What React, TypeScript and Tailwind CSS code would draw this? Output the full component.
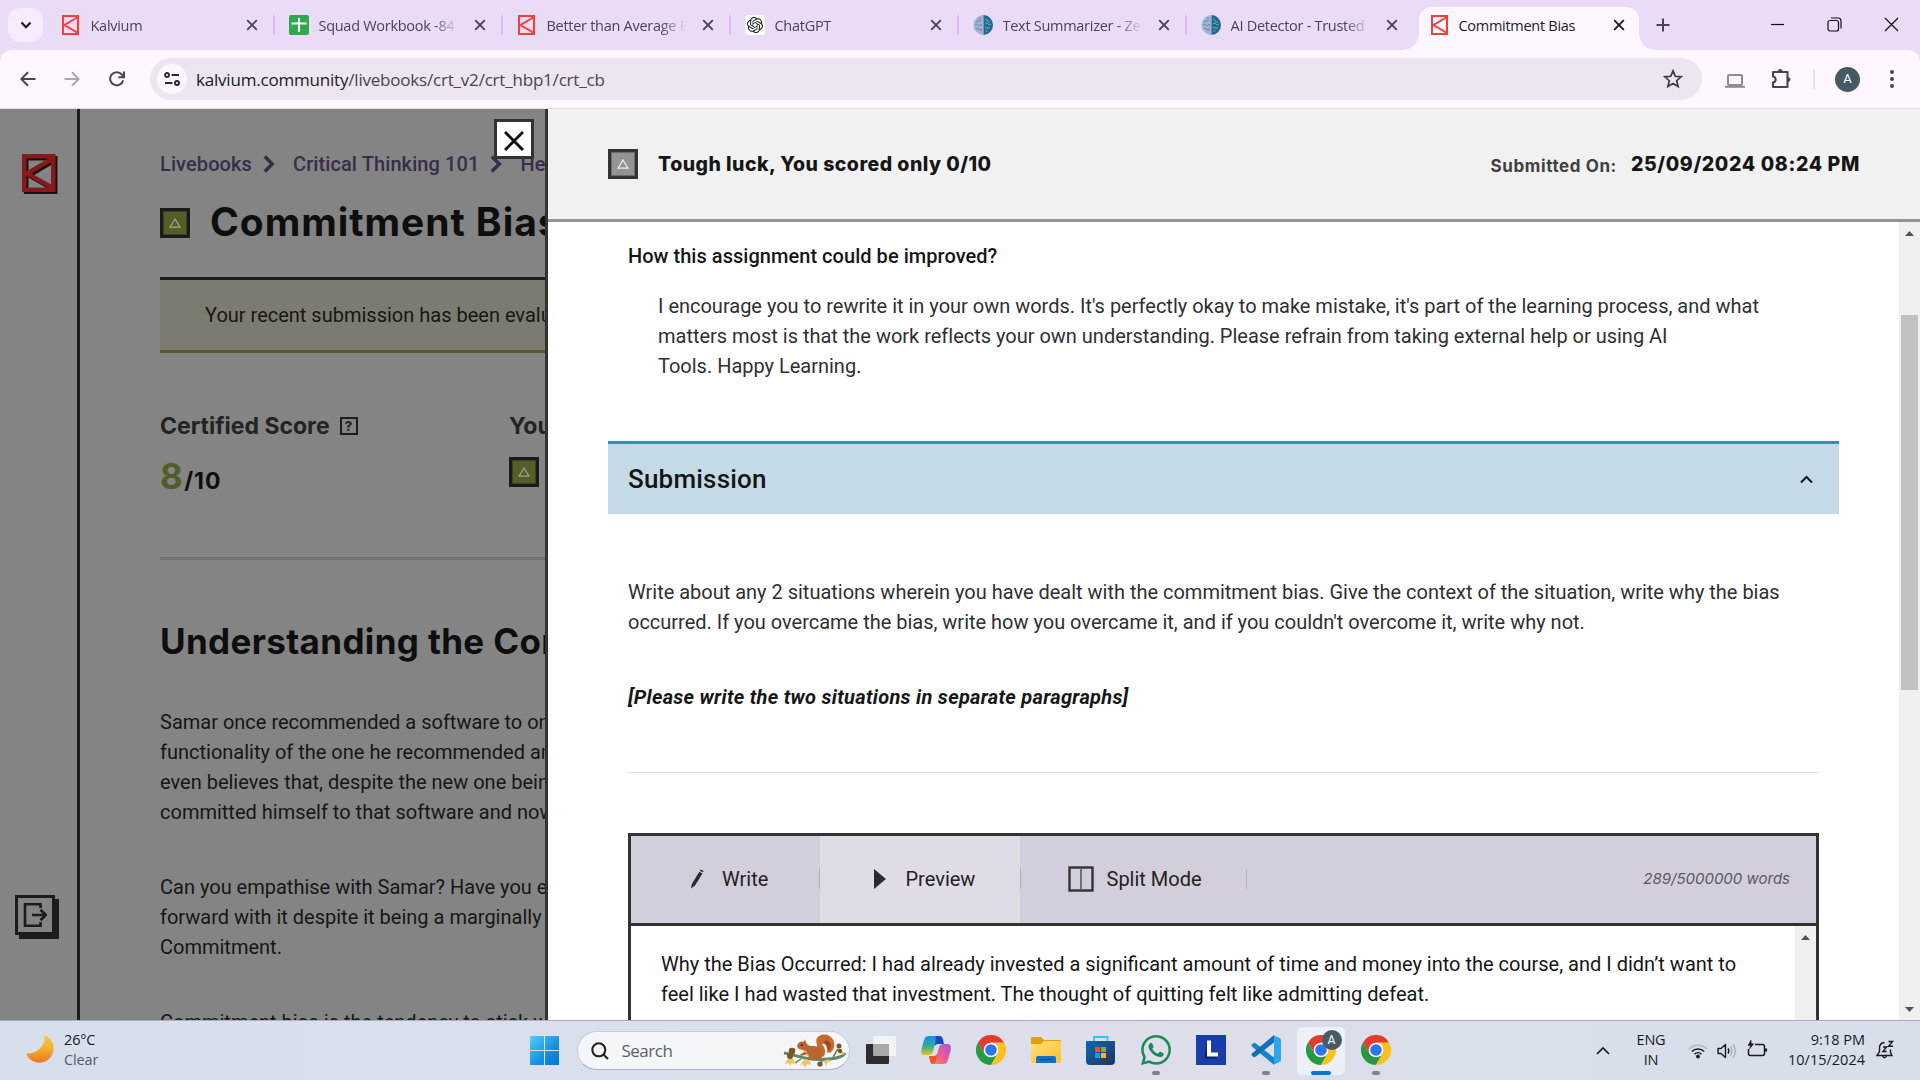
import React from "react";

type Kids = { children?: React.ReactNode };

function KalviumMark({ className, color = "#fb3b36" }: { className: string; color?: string }) {
  return (
    <svg viewBox="0 0 34 40" preserveAspectRatio="none" className={className} fill="none" stroke={color} strokeWidth="4">
      <rect x="2" y="2" width="30" height="36" />
      <path d="M32 4 L5 20 L32 36" />
    </svg>
  );
}

function SheetsIcon() {
  return (
    <span className="flex h-5 w-5 items-center justify-center rounded-[2px] bg-[#2fa84f]">
      <svg viewBox="0 0 20 20" className="h-5 w-5" stroke="#fff" strokeWidth="2">
        <path d="M2.500 8.500H17.500M10 3V17" />
      </svg>
    </span>
  );
}

function ChatGptIcon() {
  return (
    <span className="flex h-5 w-5 items-center justify-center rounded-[4px] bg-white">
      <svg viewBox="0 0 24 24" className="h-4 w-4" fill="#1d1d1d">
        <path d="M22.2819 9.8211a5.9847 5.9847 0 0 0-.5157-4.9108 6.0462 6.0462 0 0 0-6.5098-2.9A6.0651 6.0651 0 0 0 4.9807 4.1818a5.9847 5.9847 0 0 0-3.9977 2.9 6.0462 6.0462 0 0 0 .7427 7.0966 5.98 5.98 0 0 0 .511 4.9107 6.051 6.051 0 0 0 6.5146 2.9001A5.9847 5.9847 0 0 0 13.2599 24a6.0557 6.0557 0 0 0 5.7718-4.2058 5.9894 5.9894 0 0 0 3.9977-2.9001 6.0557 6.0557 0 0 0-.7475-7.0729zm-9.022 12.6081a4.4755 4.4755 0 0 1-2.8764-1.0408l.1419-.0804 4.7783-2.7582a.7948.7948 0 0 0 .3927-.6813v-6.7369l2.02 1.1686a.071.071 0 0 1 .038.052v5.5826a4.504 4.504 0 0 1-4.4945 4.4944zm-9.6607-4.1254a4.4708 4.4708 0 0 1-.5346-3.0137l.142.0852 4.783 2.7582a.7712.7712 0 0 0 .7806 0l5.8428-3.3685v2.3324a.0804.0804 0 0 1-.0332.0615L9.74 19.9502a4.4992 4.4992 0 0 1-6.1408-1.6464zM2.3408 7.8956a4.485 4.485 0 0 1 2.3655-1.9728V11.6a.7664.7664 0 0 0 .3879.6765l5.8144 3.3543-2.0201 1.1685a.0757.0757 0 0 1-.071 0l-4.8303-2.7865A4.504 4.504 0 0 1 2.3408 7.872zm16.5963 3.8558L13.1038 8.364 15.1192 7.2a.0757.0757 0 0 1 .071 0l4.8303 2.7913a4.4944 4.4944 0 0 1-.6765 8.1042v-5.6772a.79.79 0 0 0-.407-.667zm2.0107-3.0231l-.142-.0852-4.7735-2.7818a.7759.7759 0 0 0-.7854 0L9.409 9.2297V6.8974a.0662.0662 0 0 1 .0284-.0615l4.8303-2.7866a4.4992 4.4992 0 0 1 6.6802 4.66zM8.3065 12.863l-2.02-1.1638a.0804.0804 0 0 1-.038-.0567V6.0742a4.4992 4.4992 0 0 1 7.3757-3.4537l-.142.0805L8.704 5.459a.7948.7948 0 0 0-.3927.6813zm1.0976-2.3654l2.602-1.4998 2.6069 1.4998v2.9994l-2.5974 1.4997-2.6067-1.4997Z" />
      </svg>
    </span>
  );
}

function ZeroIcon() {
  return (
    <svg viewBox="0 0 20 20" className="h-5 w-5">
      <path d="M10.500 0A10 10 0 0 0 10.500 20Z" fill="#9fb4d3" />
      <path d="M10.500 0A9.500 10 0 0 1 10.500 20Z" fill="#22698f" />
      <g fill="none" strokeWidth=".8">
        <path d="M3 6l2 1 1-2 2 1M2 10l2-1 2 2 2-2 1 2M3 14l2-1 1 2 2-1 1 2M6 3l2 1" stroke="#5f80b0" />
        <path d="M12 4l2 1 1 2 2 0M12 9l2-1 2 2 2-1M12 13l2-1 1 2 2-2M13 17l1-2" stroke="#7fb2cf" />
      </g>
    </svg>
  );
}

function Tab({ icon, title, divider }: { icon: React.ReactNode; title: string; divider?: boolean }) {
  return (
    <div className="flex h-[50px] w-[228px] shrink-0 items-center">
      <span className="ml-[13.500px] flex w-5 justify-center">{icon}</span>
      <span className="ml-[10px] mt-px w-[139px] overflow-hidden whitespace-nowrap text-[14.500px] tracking-[-0.280px] text-[#4b4355] [mask-image:linear-gradient(to_right,#000_114px,transparent_139px)]">
        {title}
      </span>
      <TabClose className="ml-[15px] text-[#4b4355]" />
      <span className={divider ? "ml-auto h-5 w-[2px] rounded bg-[#d8bcff]" : "hidden"} />
    </div>
  );
}

function TabClose({ className }: { className: string }) {
  return (
    <svg viewBox="0 0 14 14" className={"h-3.5 w-3.5 shrink-0 " + className} stroke="currentColor" strokeWidth="1.900">
      <path d="M2.200 2.200l9.600 9.600M11.800 2.200l-9.600 9.600" />
    </svg>
  );
}

function TabStrip() {
  return (
    <div className="flex h-[50px] bg-[#eadcf7]">
      <div className="flex w-[47px] shrink-0 items-center pl-2">
        <span className="flex h-[34px] w-[35px] items-center justify-center rounded-[12px] bg-[#f7ebff]">
          <svg viewBox="0 0 14 14" className="h-3.5 w-3.5" fill="none" stroke="#1d1b20" strokeWidth="2.200">
            <path d="M2.500 4.500L7 9.200l4.500-4.700" />
          </svg>
        </span>
      </div>
      <Tab icon={<KalviumMark className="h-5 w-[17px]" />} title="Kalvium" divider />
      <Tab icon={<SheetsIcon />} title="Squad Workbook -84" divider />
      <Tab icon={<KalviumMark className="h-5 w-[17px]" />} title="Better than Average E" divider />
      <Tab icon={<ChatGptIcon />} title="ChatGPT" divider />
      <Tab icon={<ZeroIcon />} title="Text Summarizer - Ze" divider />
      <Tab icon={<ZeroIcon />} title="AI Detector - Trusted" />
      <div className="relative ml-[4px] mt-[7px] flex h-[43px] w-[220px] shrink-0 items-center rounded-t-[13px] bg-[#fef7ff] pb-[7px]">
        <span className="absolute -left-4 bottom-0 h-4 w-4 bg-[radial-gradient(circle_at_0_0,transparent_15.500px,#fef7ff_16px)]" />
        <span className="absolute -right-4 bottom-0 h-4 w-4 bg-[radial-gradient(circle_at_100%_0,transparent_15.500px,#fef7ff_16px)]" />
        <KalviumMark className="ml-[12px] h-5 w-[17px]" />
        <span className="ml-[10.500px] mt-px w-[142px] whitespace-nowrap text-[14.500px] tracking-[-0.280px] text-[#1d1b20]">Commitment Bias</span>
        <TabClose className="ml-[11px] text-[#1d1b20]" />
      </div>
      <svg viewBox="0 0 14 14" className="ml-[17px] mt-[18px] h-3.5 w-3.5" stroke="#4b4355" strokeWidth="2">
        <path d="M7 .5V13.500M.5 7H13.500" />
      </svg>
      <div className="ml-auto flex items-center gap-[42px] pb-px pr-[21px]">
        <svg viewBox="0 0 15 15" className="h-[15px] w-[15px]" stroke="#111" strokeWidth="1.200">
          <path d="M1 7.500H14" />
        </svg>
        <svg viewBox="0 0 15 15" className="h-[15px] w-[15px]" fill="none" stroke="#111" strokeWidth="1.200">
          <rect x="1" y="3.500" width="10.500" height="10.500" rx="2" />
          <path d="M4 1h7a3 3 0 0 1 3 3v7.500" />
        </svg>
        <svg viewBox="0 0 15 15" className="h-[15px] w-[15px]" stroke="#111" strokeWidth="1.200">
          <path d="M1 1l13 13M14 1L1 14" />
        </svg>
      </div>
    </div>
  );
}

function Toolbar() {
  return (
    <div className="h-[59px] bg-[#eadcf7]">
      <div className="flex h-full items-center rounded-t-[12px] border-b border-[#e5dcea] bg-[#fef7ff]">
        <svg viewBox="0 0 16 16" className="ml-[20px] h-4 w-4" fill="none" stroke="#4b4355" strokeWidth="2">
          <path d="M15.500 8H1.500M8 1.200L1.300 8 8 14.800" />
        </svg>
        <svg viewBox="0 0 16 16" className="ml-[28px] h-4 w-4" fill="none" stroke="#aca5b1" strokeWidth="2">
          <path d="M.5 8H14.500M8 1.200L14.700 8 8 14.800" />
        </svg>
        <svg viewBox="0 0 16 16" className="ml-[29px] h-4 w-4" fill="none" stroke="#4b4355" strokeWidth="2">
          <path d="M14.200 9.200A6.600 6.600 0 1 1 12.900 3.600L14.500 5.400M15 .5V6.200H9.400" />
        </svg>
        <div className="ml-[25px] flex h-[42px] w-[1552px] items-center rounded-full bg-[#ede6f0] pl-[7px] pr-[19px]">
          <span className="flex h-[30px] w-[30px] items-center justify-center rounded-full bg-[#fef7ff]">
            <svg viewBox="0 0 16 14" className="h-[14px] w-4" fill="none" stroke="#2b2731" strokeWidth="1.900">
              <circle cx="3" cy="3" r="2" />
              <path d="M7.500 3H15M1 11H8.500" />
              <circle cx="13" cy="11" r="2" />
            </svg>
          </span>
          <span className="ml-[9px] mt-px text-[17px] tracking-[-0.200px] text-[#4a4350]">
            <span className="text-[#1d1b20]">kalvium.community</span>/livebooks/crt_v2/crt_hbp1/crt_cb
          </span>
          <svg viewBox="0 0 20 20" className="ml-auto h-5 w-5" fill="none" stroke="#3f3947" strokeWidth="1.700">
            <path d="M10 1.800l2.300 5.500 5.900.5-4.500 3.900 1.400 5.800L10 14.400l-5.100 3.100 1.400-5.800-4.500-3.900 5.900-.5z" />
          </svg>
        </div>
        <svg viewBox="0 0 20 14" className="ml-[23px] mt-1 h-[14px] w-5" fill="none" stroke="#8f8b93" strokeWidth="2">
          <rect x="3" y="1" width="14" height="10" rx="1" />
          <path d="M0 12.800H20" />
        </svg>
        <svg viewBox="0 0 22 22" className="ml-[25px] h-[22px] w-[22px]" fill="none" stroke="#4b4355" strokeWidth="2.100">
          <path d="M3 4H17.500V19H3V14.500C6.500 14 6.500 9 3 8.500Z" strokeLinejoin="round" />
          <path d="M8.200 3.500a2 2 0 0 1 4 0zM18 9.500a2 2 0 0 1 0 4z" fill="#4b4355" strokeWidth="1" />
        </svg>
        <span className="ml-[21px] h-5 w-[2px] bg-[#eadcf7]" />
        <span className="ml-[20px] flex h-[25px] w-[25px] items-center justify-center rounded-full bg-[#455a64] font-[Roboto] text-[13px] text-white">A</span>
        <svg viewBox="0 0 4 18" className="ml-[30px] h-[18px] w-1" fill="#4b4355">
          <circle cx="2" cy="2" r="2" />
          <circle cx="2" cy="9" r="2" />
          <circle cx="2" cy="16" r="2" />
        </svg>
      </div>
    </div>
  );
}

function Badge({ tone }: { tone: "olive" | "gray" }) {
  return (
    <span
      className={
        tone === "olive"
          ? "flex h-[30px] w-[30px] shrink-0 items-center justify-center border-[3px] border-[#1b1b1b] bg-[#545e28] shadow-[inset_0_0_0_1px_#3a411d]"
          : "flex h-[30px] w-[30px] shrink-0 items-center justify-center border-[3px] border-[#333] bg-[#939393] shadow-[inset_0_0_0_1px_#6a6a6a]"
      }
    >
      <svg viewBox="0 0 12 10" className="mb-px h-[10px] w-3" fill="none" stroke={tone === "olive" ? "#a2a58e" : "#f1f1f1"} strokeWidth="1.200">
        <path d="M6 1L11 9.200H1Z" />
      </svg>
    </span>
  );
}

function Sidebar() {
  return (
    <aside className="flex w-20 shrink-0 flex-col items-start border-r-[3px] border-[#1c1c1c] bg-[#848484]">
      <svg viewBox="0 0 36 40" className="ml-[22px] mt-[45px] h-10 w-9" fill="none" strokeWidth="4.500">
        <g stroke="#111">
          <rect x="4.200" y="4.200" width="29" height="33.500" />
          <path d="M33 6L7 21.500 33 36" />
        </g>
        <g stroke="#86191b">
          <rect x="2.300" y="2.300" width="29" height="33.500" />
          <path d="M31 4.500L5 19.500 31 34" />
        </g>
      </svg>
      <span className="ml-[15px] mt-[701px] flex h-10 w-10 items-center justify-center border-[3px] border-[#1c1c1c] shadow-[4px_4px_0_0_#1c1c1c]">
        <svg viewBox="0 0 24 26" className="h-[26px] w-6" fill="none" stroke="#1c1c1c" strokeWidth="2.600">
          <path d="M17.500 6V2.200H2V23.800H17.500V20" />
          <path d="M9 13H23M17.500 7.800L22.800 13l-5.300 5.200" />
        </svg>
      </span>
    </aside>
  );
}

function CrumbArrow() {
  return (
    <svg viewBox="0 0 12 18" className="h-[18px] w-3" fill="none" stroke="#382d4a" strokeWidth="3.400">
      <path d="M1.800 1.500L9.300 9 1.800 16.500" />
    </svg>
  );
}

function Line({ children }: Kids) {
  return <span className="block whitespace-nowrap">{children}</span>;
}

function LessonPage() {
  return (
    <main className="relative w-[465px] shrink-0 overflow-hidden bg-[#848484] pl-20 text-[20px] leading-[30px] text-[#161616]">
      <nav className="mt-[40px] flex w-max items-center font-medium tracking-[0.100px] text-[#382d4a]">
        Livebooks
        <span className="ml-[11px] mr-[18px] flex"><CrumbArrow /></span>
        Critical Thinking 101
        <span className="ml-[11px] mr-[18px] flex"><CrumbArrow /></span>
        Heuristics
      </nav>
      <div className="mt-[19px] flex h-[50px] w-max items-center">
        <Badge tone="olive" />
        <h1 className="-mt-0.5 ml-[20px] font-[Inter] text-[39px] font-bold tracking-[0.950px] text-[#0e0e0e]">Commitment Bias</h1>
      </div>
      <div className="mt-[29px] flex h-[76px] w-[900px] items-center border-b-[3px] border-t-[3px] border-b-[#525d28] border-t-[#1c1c1c] bg-[#7b7b70] pl-[45px]">
        <Line>Your recent submission has been evaluated</Line>
      </div>
      <div className="mt-[58px] flex w-max font-[Inter] font-bold text-[#232323]">
        <div className="w-[349px]">
          <div className="flex items-center text-[23px]">
            Certified Score
            <span className="ml-[10px] flex h-[18px] w-[18px] items-center justify-center border-2 border-[#1c1c1c] text-[13px] font-extrabold">?</span>
          </div>
          <div className="mt-[15px] flex h-[41px] items-baseline leading-[40px]">
            <span className="text-[35px] tracking-[-0.500px] text-[#525d28]">8</span>
            <span className="ml-[2px] text-[23px] tracking-[0.900px] text-[#0e0e0e]">/10</span>
          </div>
        </div>
        <div>
          <div className="text-[23px]">Your Score</div>
          <div className="mt-[16px]"><Badge tone="olive" /></div>
        </div>
      </div>
      <div className="mt-[60px] h-[3px] w-[900px] bg-[#727272]" />
      <h2 className="mt-[61px] whitespace-nowrap font-[Inter] text-[35px] font-bold leading-[40px] tracking-[0.350px] text-[#0e0e0e]">
        Understanding the Commitment Bias
      </h2>
      <p className="mt-[46px]">
        <Line>Samar once recommended a software to one</Line>
        <Line>functionality of the one he recommended and</Line>
        <Line>even believes that, despite the new one being</Line>
        <Line>committed himself to that software and now</Line>
      </p>
      <p className="mt-[45px]">
        <Line>Can you empathise with Samar? Have you ever</Line>
        <Line>forward with it despite it being a marginally</Line>
        <Line>Commitment.</Line>
      </p>
      <p className="mt-[45px]">
        <Line>Commitment bias is the tendency to stick with</Line>
      </p>
      <button className="absolute left-[414px] top-[10px] flex h-10 w-10 items-center justify-center border-[3px] border-[#333] bg-white">
        <svg viewBox="0 0 20 20" className="mt-[3px] h-5 w-5" stroke="#111" strokeWidth="3">
          <path d="M1 1l18 18M19 1L1 19" />
        </svg>
      </button>
    </main>
  );
}

function ScrollArrow({ down }: { down?: boolean }) {
  return (
    <svg viewBox="0 0 9 5" className="h-[5px] w-[9px]" fill="#505050">
      <path d={down ? "M0 0H9L4.500 5Z" : "M0 5H9L4.500 0Z"} />
    </svg>
  );
}

function Editor() {
  return (
    <div className="mt-[60px] flex min-h-0 flex-1 flex-col border-x-[3px] border-t-[3px] border-[#333]">
      <div className="flex h-[90px] shrink-0 items-center border-b-[3px] border-[#333] bg-[#d4cedc] pb-px text-[#222]">
        <div className="flex w-[188px] items-center">
          <svg viewBox="0 0 14 20" className="ml-[59px] h-5 w-3.5" fill="#2b2b2b">
            <path d="M9.300 2.700L12.500 4.400 5 16.500 1 19.500 1.800 15Z" />
            <path d="M9.900 1.700L10.700.4 13.600 2 12.800 3.200Z" />
          </svg>
          <span className="ml-[18px]">Write</span>
        </div>
        <span className="h-5 w-px bg-[#b3a9c4]" />
        <div className="-mb-px flex h-[87px] w-[200px] items-center bg-[#e0dce6] pb-px">
          <svg viewBox="0 0 12 20" className="ml-[54px] h-5 w-3" fill="#2b2b2b">
            <path d="M0 0L12 10 0 20Z" />
          </svg>
          <span className="ml-[19.500px]">Preview</span>
        </div>
        <span className="h-5 w-px bg-[#b3a9c4]" />
        <div className="flex w-[225px] items-center">
          <svg viewBox="0 0 26 26" className="ml-[47px] h-[26px] w-[26px]" fill="none" stroke="#333">
            <rect x="1.500" y="1.500" width="23" height="23" strokeWidth="2.400" />
            <path d="M13 2V24" strokeWidth="1.800" stroke="#666" />
          </svg>
          <span className="ml-[12.500px]">Split Mode</span>
        </div>
        <span className="h-5 w-px bg-[#b3a9c4]" />
        <span className="ml-auto mr-[26px] font-[Inter] text-[15px] italic text-[#5c5861]">289/5000000 words</span>
      </div>
      <div className="flex min-h-0 flex-1 overflow-hidden bg-white">
        <div className="flex-1 pl-[30px] pt-[23px] text-[#161616]">
          <Line>Why the Bias Occurred: I had already invested a significant amount of time and money into the course, and I didn’t want to</Line>
          <Line>feel like I had wasted that investment. The thought of quitting felt like admitting defeat.</Line>
        </div>
        <div className="flex w-[21px] flex-col items-center bg-[#f0f0f0] pt-[9px]">
          <ScrollArrow />
        </div>
      </div>
    </div>
  );
}

function ReviewPanel() {
  return (
    <section className="flex min-w-0 flex-1 flex-col border-l-[3px] border-[#333] bg-white text-[20px] leading-[30px] text-[#2f2f2f]">
      <header className="flex h-[113px] shrink-0 items-center border-b-[3px] border-[#939393] bg-[#f1f1f1] pl-[60px] pr-[60px] font-[Inter]">
        <Badge tone="gray" />
        <span className="ml-[20px] text-[19.500px] font-extrabold tracking-[0.470px] text-[#161616]">Tough luck, You scored only 0/10</span>
        <span className="ml-auto mt-1 text-[17px] font-bold tracking-[0.600px] text-[#3f3f3f]">Submitted On:</span>
        <span className="ml-[14px] text-[19.500px] font-extrabold tracking-[0.630px] text-[#161616]">25/09/2024 08:24 PM</span>
      </header>
      <div className="flex min-h-0 flex-1">
        <div className="flex min-w-0 flex-1 flex-col pl-[60px] pr-[60px]">
          <h3 className="mt-[19px] pl-[20px] font-medium tracking-[0.040px] text-[#161616]">How this assignment could be improved?</h3>
          <p className="mt-[20px] pl-[50px] tracking-[-0.010px]">
            <Line>I encourage you to rewrite it in your own words. It's perfectly okay to make mistake, it's part of the learning process, and what</Line>
            <Line>matters most is that the work reflects your own understanding. Please refrain from taking external help or using AI</Line>
            <Line>Tools. Happy Learning.</Line>
          </p>
          <div className="mt-[60px] flex h-[73px] shrink-0 items-center justify-between border-t-[3px] border-[#3a8bb5] bg-[#c4dbe7] pl-[20px] pr-[26px]">
            <h2 className="text-[26px] font-medium tracking-[0.200px] text-[#161616]">Submission</h2>
            <svg viewBox="0 0 13 9" className="h-[9px] w-[13px]" fill="none" stroke="#161616" strokeWidth="2">
              <path d="M1 7.500L6.500 2 12 7.500" />
            </svg>
          </div>
          <div className="flex min-h-0 flex-1 flex-col px-[20px] pt-[63px]">
            <p className="tracking-[-0.010px]">
              <Line>Write about any 2 situations wherein you have dealt with the commitment bias. Give the context of the situation, write why the bias</Line>
              <Line>occurred. If you overcame the bias, write how you overcame it, and if you couldn't overcome it, write why not.</Line>
            </p>
            <p className="mt-[45px] font-bold italic tracking-[0.290px] text-[#161616]">[Please write the two situations in separate paragraphs]</p>
            <div className="mt-[60px] h-px shrink-0 bg-[#dedede]" />
            <Editor />
          </div>
        </div>
        <div className="flex w-[21px] flex-col items-center bg-[#f0f0f0] pb-[8px] pt-[9px]">
          <ScrollArrow />
          <div className="mt-[79px] h-[375px] w-[17px] bg-[#c1c1c1]" />
          <span className="mt-auto"><ScrollArrow down /></span>
        </div>
      </div>
    </section>
  );
}

function ChromeIcon() {
  return (
    <svg viewBox="0 0 30 30" className="h-[30px] w-[30px]">
      <path d="M2 7.500A15 15 0 0 0 15 30L21.500 18.800 8.500 18.800Z" fill="#269a43" />
      <path d="M15 30A15 15 0 0 0 28 7.500H15L21.500 18.800Z" fill="#fcc11a" />
      <path d="M2 7.500A15 15 0 0 1 28 7.500H15L8.500 18.800Z" fill="#e33b2e" />
      <circle cx="15" cy="15" r="7.300" fill="#fff" />
      <circle cx="15" cy="15" r="5.800" fill="#2b76ea" />
    </svg>
  );
}

function Squirrel() {
  return (
    <svg viewBox="0 0 64 34" className="h-[34px] w-16">
      <path d="M1 19C14 21 22 26 36 25.500 50 25 60 24 62 19" fill="none" stroke="#5f8a63" strokeWidth="3" />
      <path d="M18 25L12 29M24 26l-2 5M40 26l-3 4M50 23l5-8" stroke="#7d7a45" strokeWidth="1.500" />
      <g fill="#ecc65e">
        <path d="M4 26l4-3 3 3 1 5-3-2-2 3-1-3-4 1zM19 28l4-3 4 2 1 4-4-1-2 4-2-4-3 2zM40 28l5-3 2 3-3 1-1 4-1-4zM55 16l4 1 3 4-4-1z" />
      </g>
      <g fill="#7a5527">
        <circle cx="9" cy="17" r="3.300" />
        <circle cx="7" cy="22" r="3" />
        <circle cx="56" cy="12" r="2.500" />
        <circle cx="57" cy="17" r="2.200" />
        <circle cx="37" cy="30" r="2.600" />
      </g>
      <path d="M35 18C34 9 31 4 37 1.500 45-2 53 5 51 13 50 18 46 20 44 18 45 13 42 9 39 10 43 15 43 20 40 23Z" fill="#c9692c" />
      <path d="M44 6C49 9 49 14 45 17 45 12 43 9 40 8Z" fill="#9e4a1c" />
      <path d="M14 12C15 8 18 7 21 7.500L22 5.500 23.500 9C25 12 27 12 31 12 38 13 42 19 38 25L26 25.500 25 20 18 22 17 20.500 22 17.500C19 16 15 15.500 14 12Z" fill="#b9652f" />
      <path d="M16 14C19 16 22 15 24 18L23 23 26 21Z" fill="#e9b07c" />
      <circle cx="19" cy="11" r=".9" fill="#28160b" />
    </svg>
  );
}

function TaskApp({ children, mark, active }: Kids & { mark?: "dot" | "bar"; active?: boolean }) {
  return (
    <div
      className={
        active
          ? "relative mx-[3.500px] flex h-12 w-12 items-center justify-center rounded-[5px] bg-[#edf0f7] pb-px"
          : "relative mx-[3.500px] flex h-12 w-12 items-center justify-center pb-px"
      }
    >
      {children}
      {mark === "dot" && <span className="absolute bottom-0 left-5 h-1 w-2 rounded-full bg-[#7f8288]" />}
      {mark === "bar" && <span className="absolute bottom-0 left-3.5 h-1 w-5 rounded-full bg-[#0078d4]" />}
    </div>
  );
}

function Taskbar() {
  return (
    <footer className="flex h-[60px] shrink-0 items-center border-t border-[#a9b0bd] bg-[linear-gradient(to_right,#d8dfec,#dae0ec_45%,#dfdeea_60%,#d9dfeb_75%,#d8dfeb)] text-[15px] leading-5 text-[#1b1b1b]">
      <div className="flex w-[523px] items-center pb-1">
        <svg viewBox="0 0 28 28" className="ml-[26px] h-7 w-7">
          <defs>
            <linearGradient id="moon" x1="0" y1="0" x2="0" y2="1">
              <stop offset="0" stopColor="#f2c94b" />
              <stop offset=".5" stopColor="#f3b02e" />
              <stop offset="1" stopColor="#ee7420" />
            </linearGradient>
          </defs>
          <path d="M18.500 0A14.300 14.300 0 1 1 0 18.500C9 19.500 20 12 18.500 0Z" fill="url(#moon)" />
        </svg>
        <div className="ml-[10px] mt-0.5 text-[14.500px] tracking-[-0.150px]">
          <div>26°C</div>
          <div className="text-[#555b66]">Clear</div>
        </div>
      </div>
      <svg viewBox="0 0 29 29" className="ml-[7px] h-[29px] w-[29px]">
        <defs>
          <linearGradient id="win" x1="0" y1="0" x2="1" y2="1">
            <stop offset="0" stopColor="#4fd0fb" />
            <stop offset=".6" stopColor="#158fe0" />
            <stop offset="1" stopColor="#0672cf" />
          </linearGradient>
        </defs>
        <path d="M0 0H14V14H0ZM15 0H29V14H15ZM0 15H14V29H0ZM15 15H29V29H15Z" fill="url(#win)" />
      </svg>
      <div className="ml-[17.500px] flex h-[39px] w-[273px] items-center rounded-full border border-[#c6cddb] border-b-[#a9b0c0] bg-[#f4f6fa]">
        <svg viewBox="0 0 18 18" className="ml-[13.500px] h-[18px] w-[18px]" fill="none" stroke="#222" strokeWidth="2.100">
          <circle cx="7.800" cy="7.800" r="6.500" />
          <path d="M12.300 12.300L17 17" />
        </svg>
        <span className="ml-[12.500px] text-[17px] tracking-[-0.500px] text-[#5c5f66]">Search</span>
        <span className="ml-auto mr-[2px]"><Squirrel /></span>
      </div>
      <div className="ml-[3.500px] flex">
        <TaskApp>
          <svg viewBox="0 0 30 28" className="h-7 w-[30px]">
            <rect x="0" y="8" width="23" height="20" rx="1" fill="#2d2d2d" />
            <rect x="7.500" y="0" width="22.500" height="20" rx="1" fill="#f2f3f5" />
            <rect x="7.500" y="8" width="15.500" height="12" fill="#a9a9a9" />
          </svg>
        </TaskApp>
        <TaskApp>
          <svg viewBox="0 0 30 28" className="h-7 w-[30px]">
            <defs>
              <linearGradient id="cpa" x1="0" y1="0" x2="0" y2="1">
                <stop offset="0" stopColor="#1a8fe8" />
                <stop offset=".5" stopColor="#27a9a0" />
                <stop offset="1" stopColor="#e8c21c" />
              </linearGradient>
              <linearGradient id="cpb" x1="1" y1="0" x2="0" y2="1">
                <stop offset="0" stopColor="#a457e8" />
                <stop offset=".5" stopColor="#ec5a94" />
                <stop offset="1" stopColor="#fb8c3c" />
              </linearGradient>
            </defs>
            <path d="M8 0H18C21 0 21 3 22 7H17C14 7 13.500 10 12.500 14 11.500 18 10 19 7 19H3C-1 19 0 14 1 11L3 4C4 1 5 0 8 0Z" fill="url(#cpa)" />
            <path d="M15 0H19C21.500 0 22 3 23 8H17C15 8 14.500 9 14 10Z" fill="#1747c4" />
            <path d="M22 28H12C9 28 9 24 8 20H13C16 20 16.500 17 17.500 13 18.500 9 20 8 23 8H27C31 8 30 14 29 17L27 24C26 27 25 28 22 28Z" fill="url(#cpb)" />
            <path d="M8 20H13C15 20 16 19 16.500 17L15 24C14 28 12 28 11 28 9 27 9 24 8 20Z" fill="#f0572c" />
          </svg>
        </TaskApp>
        <TaskApp><ChromeIcon /></TaskApp>
        <TaskApp>
          <svg viewBox="0 0 30 28" className="h-7 w-[30px]">
            <defs>
              <linearGradient id="fold" x1="0" y1="0" x2="1" y2="1">
                <stop offset="0" stopColor="#ffe07a" />
                <stop offset="1" stopColor="#fdc12d" />
              </linearGradient>
            </defs>
            <path d="M0 2Q0 1 1 1H10L13 4H29Q30 4 30 5V12H0Z" fill="#dfa00f" />
            <path d="M0 8H10L13 5H29Q30 5 30 6V26Q30 27 29 27H1Q0 27 0 26Z" fill="url(#fold)" />
            <path d="M5 27V22Q5 20 7 20H23Q25 20 25 22V27Z" fill="#1173c6" />
            <path d="M8.500 23.500H21.500" stroke="#0b4f96" strokeWidth="1.200" />
          </svg>
        </TaskApp>
        <TaskApp>
          <svg viewBox="0 0 29 29" className="mr-px h-[29px] w-[29px]">
            <defs>
              <linearGradient id="store" x1="0" y1="0" x2="1" y2="1">
                <stop offset="0" stopColor="#0c68b4" />
                <stop offset="1" stopColor="#25335f" />
              </linearGradient>
            </defs>
            <path d="M8 6V1H21.500V6" fill="none" stroke="#2fc5f2" strokeWidth="1.800" />
            <path d="M0 5.500Q0 5 .5 5H28.500Q29 5 29 5.500V25Q29 29 25 29H4Q0 29 0 25Z" fill="url(#store)" />
            <path d="M9 11H14V16H9Z" fill="#f25022" />
            <path d="M15 11H20V16H15Z" fill="#7fba00" />
            <path d="M9 17H14V22H9Z" fill="#00a4ef" />
            <path d="M15 17H20V22H15Z" fill="#ffb900" />
          </svg>
        </TaskApp>
        <TaskApp mark="dot">
          <svg viewBox="0 0 24 24" className="h-[30px] w-[30px]" fill="#1c8a55">
            <path d="M17.472 14.382c-.297-.149-1.758-.867-2.030-.967-.273-.099-.471-.148-.67.150-.197.297-.767.966-.94 1.164-.173.199-.347.223-.644.075-.297-.150-1.255-.463-2.390-1.475-.883-.788-1.480-1.761-1.653-2.059-.173-.297-.018-.458.130-.606.134-.133.298-.347.446-.520.149-.174.198-.298.298-.497.099-.198.050-.371-.025-.520-.075-.149-.669-1.612-.916-2.207-.242-.579-.487-.5-.669-.510-.173-.008-.371-.010-.570-.010-.198 0-.520.074-.792.372-.272.297-1.040 1.016-1.040 2.479 0 1.462 1.065 2.875 1.213 3.074.149.198 2.096 3.200 5.077 4.487.709.306 1.262.489 1.694.625.712.227 1.360.195 1.871.118.571-.085 1.758-.719 2.006-1.413.248-.694.248-1.289.173-1.413-.074-.124-.272-.198-.570-.347m-5.421 7.403h-.004a9.870 9.870 0 01-5.031-1.378l-.361-.214-3.741.982.998-3.648-.235-.374a9.860 9.860 0 01-1.510-5.260c.001-5.450 4.436-9.884 9.888-9.884 2.640 0 5.122 1.030 6.988 2.898a9.825 9.825 0 012.893 6.994c-.003 5.450-4.437 9.884-9.885 9.884m8.413-18.297A11.815 11.815 0 0012.050 0C5.495 0 .160 5.335.157 11.892c0 2.096.547 4.142 1.588 5.945L.057 24l6.305-1.654a11.882 11.882 0 005.683 1.448h.005c6.554 0 11.890-5.335 11.893-11.893a11.821 11.821 0 00-3.480-8.413Z" />
          </svg>
        </TaskApp>
        <TaskApp>
          <svg viewBox="0 0 30 30" className="h-[30px] w-[30px]">
            <rect width="30" height="30" fill="#1b3cab" />
            <path d="M11 6L8.500 23.500 21 23.500 22 21 11 20Z" fill="#0b2450" />
            <path d="M11 5.500H15V17.500H22V21.500H11Z" fill="#fff" />
          </svg>
        </TaskApp>
        <TaskApp mark="dot">
          <svg viewBox="0 0 30 30" className="h-[30px] w-[30px]">
            <path d="M1 11.500Q0 10.500 1 9.500L2.500 8Q3.500 7.500 4.500 8.200L23 22.500V30Z" fill="#1484cf" />
            <path d="M1 18.500Q0 19.500 1 20.500L2.500 22Q3.500 22.500 4.500 21.800L23 7.500V0Z" fill="#0f70b8" />
            <path d="M22 0L29 3.300Q30 4 30 5V25Q30 26 29 26.700L22 30Q23 29.500 23 28V2Q23 .5 22 0Z" fill="#30a4ef" />
          </svg>
        </TaskApp>
        <TaskApp mark="bar" active>
          <ChromeIcon />
          <span className="absolute right-[3px] top-[3px] flex h-5 w-5 items-center justify-center rounded-full bg-[#475a66] font-[Roboto] text-[12px] font-medium text-[#dbe2e6]">A</span>
        </TaskApp>
        <TaskApp mark="dot"><ChromeIcon /></TaskApp>
      </div>
      <svg viewBox="0 0 14 9" className="ml-auto h-[9px] w-3.5" fill="none" stroke="#1b1b1b" strokeWidth="1.700">
        <path d="M1 8L7 2l6 6" />
      </svg>
      <div className="-mt-px ml-[20px] w-[42px] text-center text-[14.500px] tracking-[-0.200px]">
        <div>ENG</div>
        <div>IN</div>
      </div>
      <svg viewBox="0 0 20 16" className="ml-[16px] h-4 w-5" fill="none" strokeWidth="1.500">
        <path d="M1 6A12.500 12.500 0 0 1 19 6" stroke="#b3b8c3" />
        <path d="M3.800 8.500A8.800 8.800 0 0 1 16.200 8.500M6.500 11.200A5 5 0 0 1 13.500 11.200" stroke="#1b1b1b" />
        <circle cx="10" cy="13.500" r="1.900" fill="#1b1b1b" />
      </svg>
      <svg viewBox="0 0 21 16" className="ml-[9px] h-4 w-[21px]" fill="none" stroke="#1b1b1b" strokeWidth="1.400">
        <path d="M1 5.500H4L8.500 1.500V14.500L4 10.500H1Z" strokeLinejoin="round" />
        <path d="M11 5.500Q12.800 8 11 10.500" />
        <path d="M13.500 3.500Q16.500 8 13.500 12.500M16 1.500Q21 8 16 14.500" stroke="#a9afbb" />
      </svg>
      <svg viewBox="0 0 21 18" className="mb-1 ml-[9px] h-[18px] w-[21px]" fill="none" stroke="#1b1b1b" strokeWidth="1.500">
        <path d="M8 4.500H15.500Q17.500 4.500 17.500 6.500V13.500Q17.500 15.500 15.500 15.500H3.500Q1.500 15.500 1.500 13.500V9" />
        <path d="M19 8.500V11.500" strokeWidth="2.200" />
        <path d="M4 0L1 5.500H3.500L2.500 9 6.800 3.800H4.300Z" fill="#1b1b1b" strokeWidth=".5" />
      </svg>
      <div className="-mt-px ml-[19px] w-[78px] whitespace-nowrap text-right text-[14.500px]">
        <div>9:18 PM</div>
        <div>10/15/2024</div>
      </div>
      <svg viewBox="0 0 18 19" className="mb-0.5 ml-[11px] mr-[26px] h-[19px] w-[18px]" fill="none" stroke="#1b1b1b" strokeWidth="1.400">
        <path d="M8.500 2.500Q3.500 3 3.500 8V11.500L1 15.500H16L14.500 12.500V9.500" />
        <path d="M6.500 16Q8.500 19.500 10.500 16" />
        <path d="M7 7H10.500L7 11.500H10.700M12.500 1.500H16.500L12.500 6.200H17" />
      </svg>
    </footer>
  );
}

export default function App() {
  return (
    <div className="flex h-[1080px] w-[1920px] flex-col overflow-hidden font-['Open_Sans',sans-serif]">
      <TabStrip />
      <Toolbar />
      <div className="flex h-[911px] shrink-0 overflow-hidden font-[Roboto,sans-serif]">
        <Sidebar />
        <LessonPage />
        <ReviewPanel />
      </div>
      <Taskbar />
    </div>
  );
}
